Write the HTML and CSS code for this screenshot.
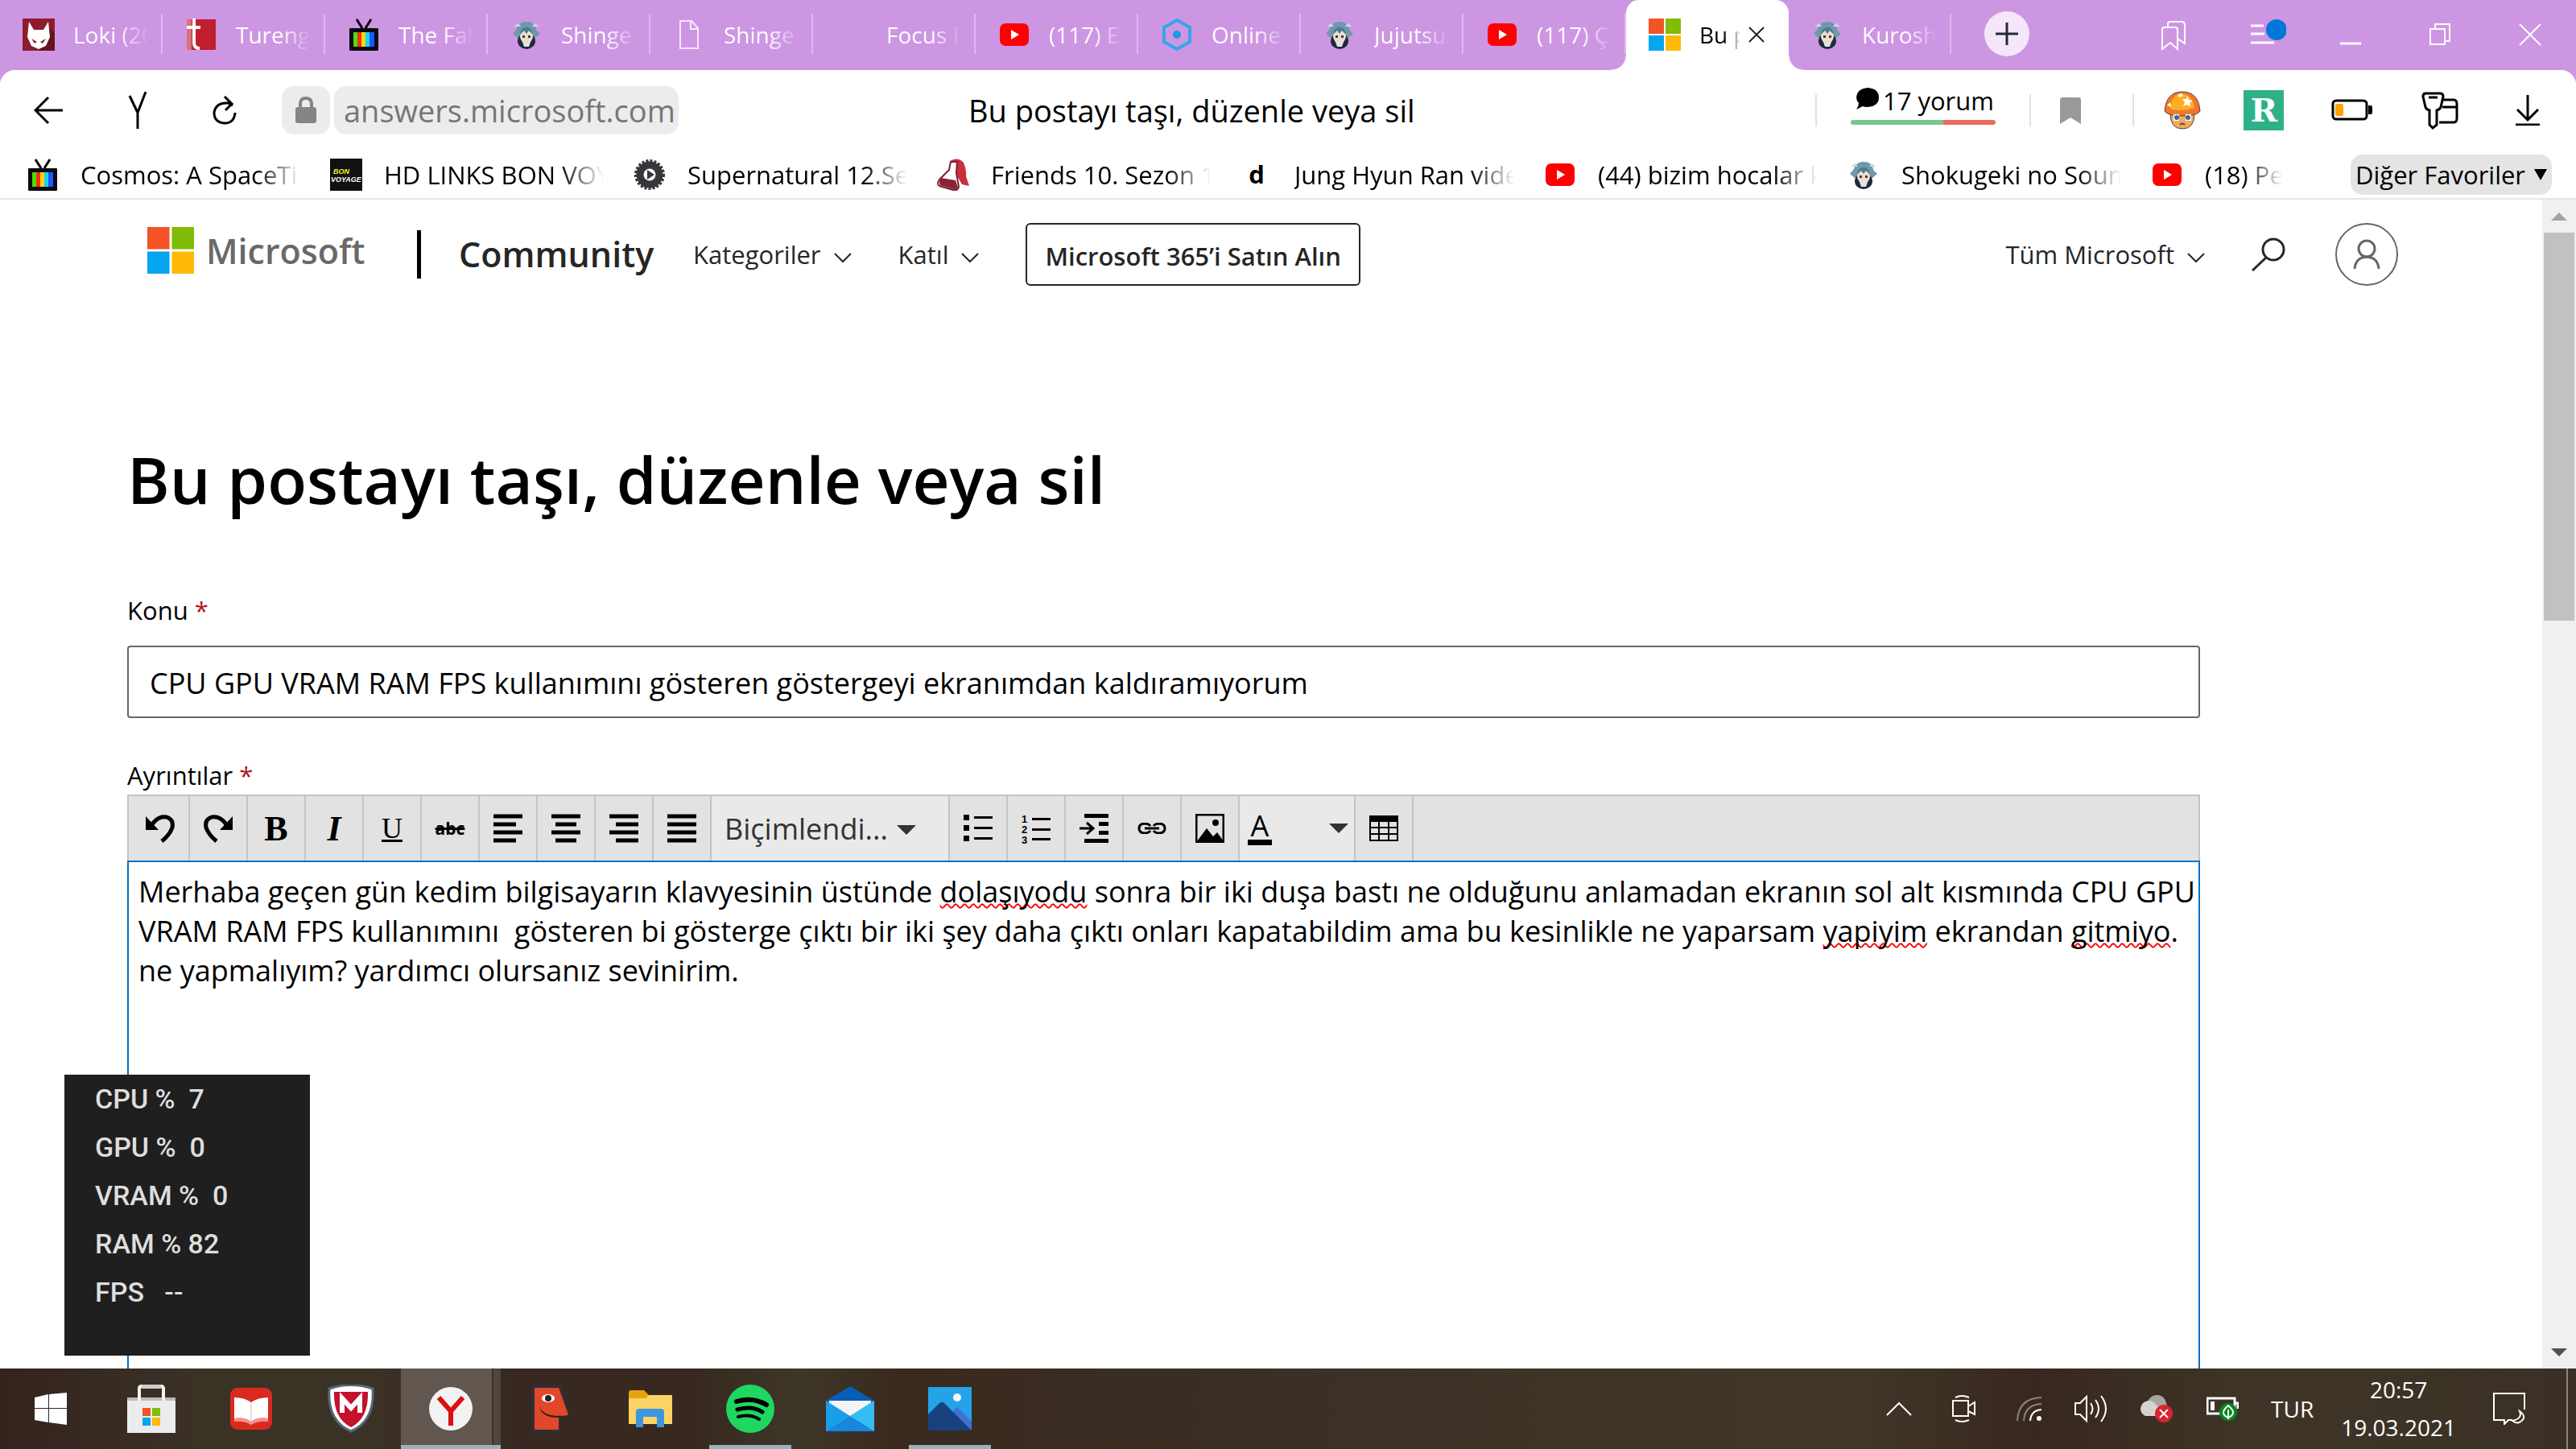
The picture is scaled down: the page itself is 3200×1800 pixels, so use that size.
FILE: index.html
```
<!DOCTYPE html>
<html lang="tr">
<head>
    <meta charset="UTF-8">
    <title>Bu postayı taşı, düzenle veya sil</title>
    <link rel="stylesheet" href="styles.css">
</head>
<body>
    <!-- Shared icons -->
    <svg class="sprite" width="0" height="0" aria-hidden="true">
        <symbol id="tv" viewBox="0 0 40 40">
            <path d="M11 1l7 11M29 1l-7 11" stroke="#000" stroke-width="3" fill="none"/>
            <rect x="2" y="12" width="36" height="28" rx="1" fill="#0b0b12"/>
            <path d="M7 17h5v18H7z" fill="#4be000"/>
            <path d="M12 17h5v18h-5z" fill="#ff2a1a"/>
            <path d="M17 17h5v18h-5z" fill="#ffd800"/>
            <path d="M22 17h5v18h-5z" fill="#19d3f5"/>
            <path d="M27 17h6v18h-6z" fill="#1d57ff"/>
        </symbol>
        <symbol id="youtube" viewBox="0 0 40 40">
            <rect x="2" y="6" width="36" height="28" rx="7" fill="#f00"/>
            <path d="M16 14l10 6-10 6z" fill="#fff"/>
        </symbol>
        <symbol id="anime" viewBox="0 0 40 40">
            <path d="M20 4c8 0 12 5 12 10l5 5-6 5H9l-6-5 5-6c1-5 5-9 12-9z" fill="#6f99ab"/>
            <path d="M4 10l6-4 3 4zM36 10l-6-4-3 4z" fill="#c9dbe0"/>
            <ellipse cx="20" cy="28" rx="11" ry="10" fill="#1d2a3c"/>
            <ellipse cx="20" cy="22" rx="8" ry="9" fill="#f0dccb"/>
            <path d="M12 20c1-8 5-9 8-9s7 1 8 9l-5-5-3 4-3-4z" fill="#4d7a90"/>
            <path d="M15 21h3v3h-3zM22 21h3v3h-3z" fill="#2c4454"/>
            <path d="M15 29h10l-2 6h-6z" fill="#dfe3e2"/>
        </symbol>
        <symbol id="microsoft" viewBox="0 0 40 40">
            <path d="M0 0h19v19H0z" fill="#f35325"/>
            <path d="M21 0h19v19H21z" fill="#81bc06"/>
            <path d="M0 21h19v19H0z" fill="#05a6f0"/>
            <path d="M21 21h19v19H21z" fill="#ffba08"/>
        </symbol>
        <symbol id="chevron" viewBox="0 0 22 14">
            <path d="M1 2l10 10L21 2" fill="none" stroke="#262626" stroke-width="2"/>
        </symbol>
        <symbol id="triangle" viewBox="0 0 24 12">
            <path d="M0 0h24L12 12z" fill="#333"/>
        </symbol>
    </svg>

    <!-- Tabs -->
    <div class="tab-bar">
        <div class="tabs">
            <button class="tab">
                <svg class="favicon" viewBox="0 0 40 40"><rect width="40" height="40" fill="#8c1c2e"/><path d="M33 12l7 6v22H20z" fill="#65131f"/><path d="M8 4l6 10h12l6-10 2 19-5 11-9 4-9-4-5-11z" fill="#fff"/><path d="M11 25l7 4-3 2zM29 25l-7 4 3 2z" fill="#8c1c2e"/></svg>
                <span class="tab-title">Loki (20</span>
            </button>
            <button class="tab">
                <svg class="favicon" viewBox="0 0 40 40"><path d="M2 1h36v38H2z" fill="#c01f2e"/><path d="M2 1h6v38H2z" fill="#d9707c"/><path d="M11 0v30q0 7 7 7M2 11h17" fill="none" stroke="#fff" stroke-width="4"/></svg>
                <span class="tab-title">Tureng</span>
            </button>
            <button class="tab">
                <svg class="favicon"><use href="#tv"/></svg>
                <span class="tab-title">The Fal</span>
            </button>
            <button class="tab">
                <svg class="favicon"><use href="#anime"/></svg>
                <span class="tab-title">Shinge</span>
            </button>
            <button class="tab">
                <svg class="favicon" viewBox="0 0 40 40"><path d="M9 3h14l8 9v25H9zM22 3v10h9" fill="none" stroke="#f6e9fb" stroke-width="2"/></svg>
                <span class="tab-title">Shinge</span>
            </button>
            <button class="tab">
                <span class="favicon"></span>
                <span class="tab-title">Focus F</span>
            </button>
            <button class="tab">
                <svg class="favicon"><use href="#youtube"/></svg>
                <span class="tab-title">(117) E</span>
            </button>
            <button class="tab">
                <svg class="favicon" viewBox="0 0 40 40"><path d="M20 2l16 9v18l-16 9-16-9V11z" fill="none" stroke="#35a6ea" stroke-width="4"/><circle cx="20" cy="20" r="5" fill="#1f98e6"/></svg>
                <span class="tab-title">Online</span>
            </button>
            <button class="tab">
                <svg class="favicon"><use href="#anime"/></svg>
                <span class="tab-title">Jujutsu</span>
            </button>
            <button class="tab">
                <svg class="favicon"><use href="#youtube"/></svg>
                <span class="tab-title">(117) Ç</span>
            </button>
            <button class="tab active">
                <svg class="favicon"><use href="#microsoft"/></svg>
                <span class="tab-title">Bu p</span>
                <svg class="tab-close" viewBox="0 0 20 20"><path d="M1 1l18 18M19 1L1 19" stroke="#222" stroke-width="2"/></svg>
            </button>
            <button class="tab">
                <svg class="favicon"><use href="#anime"/></svg>
                <span class="tab-title">Kurosh</span>
            </button>
        </div>
        <button class="new-tab" aria-label="Yeni sekme">
            <svg width="28" height="28" viewBox="0 0 28 28"><path d="M14 0v28M0 14h28" stroke="#1f2a3a" stroke-width="3"/></svg>
        </button>
        <div class="window-controls">
            <button aria-label="Favoriler"><svg width="34" height="40" viewBox="0 0 34 40"><path d="M3 12q0-2 2-2h14q3 0 3 3v24l-9-8-10 8zM10 9V5q0-2 3-2h14q4 0 4 4v23l-9-6" fill="none" stroke="#fff" stroke-width="2"/></svg></button>
            <button class="menu-btn" aria-label="Menü"><svg width="46" height="40" viewBox="0 0 46 40"><path d="M2 8h16M2 18h17M2 29h29" stroke="#fff" stroke-width="3"/><circle cx="34" cy="13" r="13" fill="#0078d7"/></svg></button>
            <button aria-label="Küçült"><svg width="26" height="40" viewBox="0 0 26 40"><path d="M0 30h26" stroke="#fff" stroke-width="3"/></svg></button>
            <button aria-label="Önceki boyut"><svg width="28" height="40" viewBox="0 0 28 40"><path d="M2 12h18v19H2zM8 11V6h18v21h-5" fill="none" stroke="#fff" stroke-width="2"/></svg></button>
            <button aria-label="Kapat"><svg width="28" height="40" viewBox="0 0 28 40"><path d="M1 6l26 26M27 6L1 32" stroke="#fff" stroke-width="2"/></svg></button>
        </div>
    </div>

    <!-- Address bar -->
    <div class="browser-top">
        <div class="address-bar">
            <div class="nav-buttons">
                <button aria-label="Geri"><svg width="36" height="36" viewBox="0 0 36 36"><path d="M36 18H2M18 2L2 18l16 16" fill="none" stroke="#000" stroke-width="3"/></svg></button>
                <button aria-label="Yandex"><svg width="24" height="46" viewBox="0 0 24 46"><path d="M2 5l10 21M22 0L12 26v20" fill="none" stroke="#000" stroke-width="3"/></svg></button>
                <button aria-label="Yenile"><svg width="30" height="36" viewBox="0 0 30 36"><path d="M25 12l-6-3Q4 8 2 21q0 12 13 13 12 0 13-13M15 1l9 9-8 8" fill="none" stroke="#000" stroke-width="3"/></svg></button>
            </div>
            <button class="chip lock" aria-label="Güvenli bağlantı"><svg width="26" height="34" viewBox="0 0 26 34"><rect y="13" width="26" height="20" rx="3" fill="#858585"/><path d="M6 14V9q0-7 7-7t7 7v5" fill="none" stroke="#858585" stroke-width="4"/></svg></button>
            <button class="chip url">answers.microsoft.com</button>
            <div class="page-title">Bu postayı taşı, düzenle veya sil</div>
            <div class="tools">
                <span class="tool-sep"></span>
                <div class="reviews">
                    <div class="reviews-text">
                        <svg width="30" height="28" viewBox="0 0 30 28"><path d="M15 0q14 1 14 12t-14 12q-4 0-6-1l-8 4q3-4 3-8-3-3-3-7Q2 1 15 0z"/></svg>
                        <span>17 yorum</span>
                    </div>
                    <div class="reviews-bar"></div>
                </div>
                <span class="tool-sep"></span>
                <button class="mark" aria-label="Favorilere ekle"><svg width="26" height="33" viewBox="0 0 26 33"><path d="M0 3q0-3 3-3h20q3 0 3 3v30l-13-8-13 8z" fill="#999"/></svg></button>
                <span class="tool-sep"></span>
                <div class="extensions">
                    <button class="mushroom" aria-label="Mantar"><svg width="46" height="48" viewBox="0 0 46 48"><path d="M8 28q0 19 15 19t15-19z" fill="#f0ac62" stroke="#5b4030" stroke-width="1"/><path d="M1 25Q3 1 23 1t22 24q-4 6-22 6T1 25z" fill="#f0782d" stroke="#5b4030" stroke-width="1"/><path d="M8 22Q9 5 22 3q14 2 16 18-8 3-15 3-9 0-15-2z" fill="#ffae22"/><path d="M29 6l2 5 5 1-4 3 1 5-4-3-5 2 2-5-3-4h5zM4 18l4-4 1 6zM17 5l5-2 2 3-4 2z" fill="#fff"/><path d="M12 29h7v8h-7zM27 29h7v8h-7z" fill="#fff"/><circle cx="16" cy="33" r="3" fill="#2e6aa3"/><circle cx="30" cy="33" r="3" fill="#2e6aa3"/><path d="M20 42q3-3 6 0" fill="none" stroke="#5b4030" stroke-width="2"/></svg></button>
                    <button class="readly">R</button>
                    <button aria-label="Pil"><svg width="52" height="28" viewBox="0 0 52 28"><rect x="2" y="2" width="42" height="23" rx="4" fill="#fff" stroke="#000" stroke-width="3"/><path d="M46 8h3q2 0 2 3v5q0 3-2 3h-3z"/><rect x="5" y="6" width="10" height="15" rx="2" fill="#ffa200"/></svg></button>
                    <button aria-label="Parolalar"><svg width="46" height="48" viewBox="0 0 46 48"><path d="M27 11h13q4 0 4 5v18q0 5-4 5H22M26 20h18" fill="none" stroke="#000" stroke-width="3"/><path d="M5 3h18q4 0 4 4l-3 13q-1 3-5 4v18l-5 4-4-4V24q-4-1-5-4L2 7q0-4 3-4z" fill="#fff" stroke="#000" stroke-width="3"/><path d="M9 8h11" stroke="#000" stroke-width="3"/></svg></button>
                    <button aria-label="İndirilenler"><svg width="30" height="38" viewBox="0 0 30 38"><path d="M15 0v31M2 18l13 13 13-13M0 37h30" fill="none" stroke="#000" stroke-width="3"/></svg></button>
                </div>
            </div>
        </div>

        <nav class="bookmarks">
            <a href="#" class="bookmark"><svg class="favicon"><use href="#tv"/></svg><span>Cosmos: A SpaceTi</span></a>
            <a href="#" class="bookmark">
                <svg class="favicon" viewBox="0 0 40 40"><rect width="40" height="40" fill="#111"/><text x="4" y="19" class="bon bon-top">BON</text><text x="1" y="29" class="bon">VOYAGE</text></svg>
                <span>HD LINKS BON VOY</span>
            </a>
            <a href="#" class="bookmark">
                <svg class="favicon" viewBox="0 0 40 40"><circle cx="20" cy="20" r="17" fill="none" stroke="#35373c" stroke-width="4" stroke-dasharray="3 2"/><circle cx="20" cy="20" r="12" fill="none" stroke="#35373c" stroke-width="9"/><path d="M17 14l9 6-9 6z" fill="#35373c"/></svg>
                <span>Supernatural 12.Sez</span>
            </a>
            <a href="#" class="bookmark">
                <svg class="favicon" viewBox="0 0 40 40"><path d="M16 3q10-6 17 2 4 9 3 17l4 12-9-2-7-12z" fill="#c9303a"/><path d="M17 4h8l-1 14 3 17q-1 5-7 4L3 34q-4-3 0-8L15 14z" fill="#fff" stroke="#7c2033" stroke-width="2"/><path d="M5 24l18 3 3 9q-2 3-6 2L4 33q-3-4 1-9z" fill="#8b2236"/></svg>
                <span>Friends 10. Sezon 1</span>
            </a>
            <a href="#" class="bookmark"><span class="favicon letter-icon">d</span><span>Jung Hyun Ran vide</span></a>
            <a href="#" class="bookmark"><svg class="favicon"><use href="#youtube"/></svg><span>(44) bizim hocalar k</span></a>
            <a href="#" class="bookmark"><svg class="favicon"><use href="#anime"/></svg><span>Shokugeki no Soum</span></a>
            <a href="#" class="bookmark last"><svg class="favicon"><use href="#youtube"/></svg><span>(18) Pe</span></a>
            <button class="other">Diğer Favoriler <svg width="16" height="14" viewBox="0 0 16 14"><path d="M0 0h16L8 14z"/></svg></button>
        </nav>
    </div>

    <!-- Web page -->
    <div class="viewport">
        <div class="page">
            <header class="site-header">
                <a href="#" class="logo"><svg width="58" height="58"><use href="#microsoft"/></svg>Microsoft</a>
                <span class="divider"></span>
                <a href="#" class="community">Community</a>
                <button class="menu">Kategoriler <svg width="22" height="14"><use href="#chevron"/></svg></button>
                <button class="menu">Katıl <svg width="22" height="14"><use href="#chevron"/></svg></button>
                <a href="#" class="buy">Microsoft 365’i Satın Alın</a>
                <div class="header-right">
                    <button class="menu">Tüm Microsoft <svg width="22" height="14"><use href="#chevron"/></svg></button>
                    <button class="search" aria-label="Ara"><svg width="42" height="42" viewBox="0 0 42 42"><circle cx="27" cy="15" r="13" fill="none" stroke="#262626" stroke-width="3"/><path d="M18 25L1 41" stroke="#262626" stroke-width="3"/></svg></button>
                    <button class="account" aria-label="Hesap"><svg width="78" height="78" viewBox="0 0 78 78"><g fill="none" stroke="#666" stroke-width="2"><circle cx="39" cy="39" r="38"/><circle cx="39" cy="32" r="10" stroke-width="3"/><path d="M24 57q1-14 15-15 14 1 15 15" stroke-width="3"/></g></svg></button>
                </div>
            </header>

            <main class="edit-form">
                <h1>Bu postayı taşı, düzenle veya sil</h1>

                <label for="subject">Konu <span class="required">*</span></label>
                <input type="text" id="subject" name="subject" value="CPU GPU VRAM RAM FPS kullanımını gösteren göstergeyi ekranımdan kaldıramıyorum">

                <label id="detailsLabel" class="details-label">Ayrıntılar <span class="required">*</span></label>
                <div class="toolbar">
                    <button aria-label="Geri al"><svg width="38" height="36" viewBox="0 0 38 36"><path d="M9 13Q17 2 27 4q9 3 7 13-3 9-13 17" fill="none" stroke="#000" stroke-width="5"/><path d="M1 3v17h16z"/></svg></button>
                    <button aria-label="Yinele"><svg width="38" height="36" viewBox="0 0 38 36"><path d="M29 13Q21 2 11 4 2 7 4 17q3 9 13 17" fill="none" stroke="#000" stroke-width="5"/><path d="M37 3v17H21z"/></svg></button>
                    <button class="bold">B</button>
                    <button class="italic">I</button>
                    <button class="underline">U</button>
                    <button class="strike">abc</button>
                    <button aria-label="Sola hizala"><svg width="36" height="36" viewBox="0 0 36 36"><path d="M0 3h36M0 13h28M0 23h36M0 33h28" stroke="#000" stroke-width="5"/></svg></button>
                    <button aria-label="Ortala"><svg width="36" height="36" viewBox="0 0 36 36"><path d="M0 3h36M5 13h26M0 23h36M5 33h26" stroke="#000" stroke-width="5"/></svg></button>
                    <button aria-label="Sağa hizala"><svg width="36" height="36" viewBox="0 0 36 36"><path d="M0 3h36M8 13h28M0 23h36M8 33h28" stroke="#000" stroke-width="5"/></svg></button>
                    <button aria-label="İki yana yasla"><svg width="36" height="36" viewBox="0 0 36 36"><path d="M0 3h36M0 13h36M0 23h36M0 33h36" stroke="#000" stroke-width="5"/></svg></button>
                    <div class="format">
                        <select aria-label="Biçimlendirme"><option>Biçimlendi...</option></select>
                        <svg width="24" height="12"><use href="#triangle"/></svg>
                    </div>
                    <button aria-label="Madde işaretleri"><svg width="38" height="36" viewBox="0 0 38 36"><path d="M1 1h7v7H1zM1 14h7v7H1zM1 27h7v7H1zM14 3h23v3H14zM14 16h23v3H14zM14 29h23v3H14z"/></svg></button>
                    <button aria-label="Numaralandırma"><svg width="36" height="38" viewBox="0 0 36 38"><path d="M13 6h23v3H13zM13 19h23v3H13zM13 31h23v3H13z"/><g class="list-number"><text x="0" y="12">1</text><text x="0" y="25">2</text><text x="0" y="38">3</text></g></svg></button>
                    <button aria-label="Girintiyi artır"><svg width="36" height="36" viewBox="0 0 36 36"><path d="M6 0h30v5H6zM24 10h12v5H24zM24 21h12v5H24zM6 31h30v5H6z"/><path d="M0 18h16M9 11l8 7-8 7" fill="none" stroke="#000" stroke-width="3"/></svg></button>
                    <button aria-label="Bağlantı"><svg width="36" height="14" viewBox="0 0 36 14"><path d="M16 4q-2-3-8-3-6 1-6 6t6 6q6 0 8-3M20 4q2-3 8-3 6 1 6 6t-6 6q-6 0-8-3M9 7h18" fill="none" stroke="#000" stroke-width="3"/></svg></button>
                    <button aria-label="Resim"><svg width="36" height="36" viewBox="0 0 36 36"><path d="M1 1h34v34H1z" fill="none" stroke="#000" stroke-width="3"/><circle cx="25" cy="11" r="4"/><path d="M2 34l12-16 8 10 5-5 8 11z"/></svg></button>
                    <button class="color">
                        <span>A</span>
                        <svg width="24" height="12"><use href="#triangle"/></svg>
                    </button>
                    <button aria-label="Tablo"><svg width="36" height="32" viewBox="0 0 36 32"><path d="M1 1h34v30H1zM1 15h34M1 23h34M12 8v22M24 8v22" fill="none" stroke="#000" stroke-width="2"/><path d="M0 0h36v8H0z"/></svg></button>
                </div>
                <div class="editor" contenteditable="true" spellcheck="false" role="textbox" aria-labelledby="detailsLabel">Merhaba geçen gün kedim bilgisayarın klavyesinin üstünde <span class="typo">dolaşıyodu</span> sonra bir iki duşa bastı ne olduğunu anlamadan ekranın sol alt kısmında CPU GPU<br>VRAM RAM FPS kullanımını&nbsp; gösteren bi gösterge çıktı bir iki şey daha çıktı onları kapatabildim ama bu kesinlikle ne yaparsam <span class="typo">yapiyim</span> ekrandan <span class="typo">gitmiyo</span>.<br>ne yapmalıyım? yardımcı olursanız sevinirim.</div>
            </main>
        </div>
        <div class="scrollbar">
            <svg width="20" height="10" viewBox="0 0 20 10"><path d="M0 10h20L10 0z" fill="#a3a3a3"/></svg>
            <div class="thumb"></div>
            <svg width="20" height="10" viewBox="0 0 20 10"><path d="M0 0h20L10 10z" fill="#505050"/></svg>
        </div>
    </div>

    <!-- Performance overlay -->
    <div class="stats">
        <div>CPU %  7</div>
        <div>GPU %  0</div>
        <div>VRAM %  0</div>
        <div>RAM % 82</div>
        <div>FPS   --</div>
    </div>

    <!-- Taskbar -->
    <footer class="taskbar">
        <button class="start" aria-label="Başlat"><svg width="40" height="40" viewBox="0 0 40 40"><path d="M0 6l17-4v17H0zM18 2l22-2v19H18zM0 20h17v17L0 34zM18 20h22v20l-22-3z" fill="#fff"/></svg></button>
        <button class="app" aria-label="Store"><svg width="60" height="60" viewBox="0 0 60 60"><path d="M0 16h60v44H0z" fill="#ececec"/><path d="M0 16h60v4H0z" fill="#bbb"/><path d="M15 20V5q0-3 3-3h24q3 0 3 3v15" fill="none" stroke="#f4f4f4" stroke-width="4"/><path d="M18 0h24v5H18z" fill="#ccc"/><path d="M19 29h10v10H19z" fill="#f35325"/><path d="M31 29h10v10H31z" fill="#81bc06"/><path d="M19 41h10v10H19z" fill="#05a6f0"/><path d="M31 41h10v10H31z" fill="#ffba08"/></svg></button>
        <button class="app" aria-label="Okuyucu"><svg width="52" height="52" viewBox="0 0 52 52"><rect width="52" height="52" rx="9" fill="#da2a20"/><path d="M5 12q13 0 21 6 8-6 21-6v26q-13-2-21 4-8-6-21-4z" fill="#fff"/><path d="M5 38q13-2 21 4 8-6 21-4v4q-13-1-21 4-8-5-21-4z" fill="#f0948d"/><path d="M26 18v24" stroke="#e6b5b2" stroke-width="1"/></svg></button>
        <button class="app" aria-label="McAfee"><svg width="58" height="60" viewBox="0 0 58 60"><path d="M2 5Q29-4 56 5q3 40-27 53Q-1 45 2 5z" fill="#fff" stroke="#566675" stroke-width="3"/><path d="M8 9h42q1 33-21 44Q7 42 8 9z" fill="#c4122d"/><path d="M18 35V17l11 12 11-12v18" fill="none" stroke="#fff" stroke-width="6"/></svg></button>
        <button class="app current" aria-label="Yandex"><svg width="54" height="54" viewBox="0 0 54 54"><circle cx="27" cy="27" r="27" fill="#f2f2f2"/><path d="M12 13l15 17 15-17M27 29v19" fill="none" stroke="#dc0f0f" stroke-width="6"/></svg></button>
        <button class="app" aria-label="Maske"><svg width="46" height="60" viewBox="0 0 46 60"><path d="M0 0h37v4l9 34q-6 6-11 4v18H0z" fill="#2d3036"/><path d="M3 4h30l12 33q-5 4-12 3v16H3z" fill="#e1472a"/><path d="M9 27q6 15 36 11-4 3-13 3Q12 41 9 27z" fill="#3a1e1a"/><ellipse cx="20" cy="17" rx="8" ry="5" fill="#fff"/><circle cx="20" cy="17" r="4" fill="#222"/></svg></button>
        <button class="app" aria-label="Dosya Gezgini"><svg width="54" height="46" viewBox="0 0 54 46"><path d="M0 3q0-3 3-3h16l6 6h26q3 0 3 3v33H0z" fill="#e4a50c"/><path d="M0 10h21l4-4h29v36H0z" fill="#fdd365"/><path d="M9 46V27q0-4 4-4h27q4 0 4 4v19h-9V33H18v13z" fill="#3b96df"/></svg></button>
        <button class="app open" aria-label="Spotify"><svg width="60" height="60" viewBox="0 0 60 60"><circle cx="30" cy="30" r="30" fill="#1ed760"/><g fill="none" stroke="#000" stroke-linecap="round"><path d="M13 21q20-6 37 4" stroke-width="6"/><path d="M14 31q18-5 31 3" stroke-width="5"/><path d="M15 40q15-4 26 3" stroke-width="4"/></g></svg></button>
        <button class="app" aria-label="Posta"><svg width="60" height="56" viewBox="0 0 60 56"><path d="M0 18L30 0l30 18v15H0z" fill="#075eb6"/><path d="M4 18h52v20H4z" fill="#f5f5f5"/><path d="M0 18l30 19 30-19v38H0z" fill="#1a9eea"/><path d="M0 56l60-38v38z" fill="#35bdf3"/><path d="M30 37l30 19H0z" fill="#1587dc"/></svg></button>
        <button class="app open" aria-label="Fotoğraflar"><svg width="54" height="54" viewBox="0 0 54 54"><rect width="54" height="54" fill="#24a3e8"/><path d="M20 43l16-18 18 18v11H20z" fill="#4370ce"/><path d="M0 34l14-14q3-3 6 0l34 34H0z" fill="#17417f"/><circle cx="36" cy="13" r="5" fill="#f1f5f9"/></svg></button>

        <div class="tray">
            <svg class="wide-gap" width="32" height="18" viewBox="0 0 32 18"><path d="M1 17L16 2l15 15" fill="none" stroke="#fff" stroke-width="2"/></svg>
            <svg class="wide-gap" width="30" height="36" viewBox="0 0 30 36"><path d="M1 8h19v19H1zM20 15l8-5v15l-8-4M4 4q8-4 17 0M4 32q8 4 17 0" fill="none" stroke="#fff" stroke-width="2"/></svg>
            <svg width="32" height="32" viewBox="0 0 32 32"><g fill="none" stroke="#8b857f" stroke-width="2"><path d="M1 31Q2 3 31 2M9 31q1-20 22-21"/><path d="M17 31q1-13 14-14" stroke="#fff"/></g><circle cx="28" cy="28" r="3" fill="#fff"/></svg>
            <svg width="42" height="38" viewBox="0 0 42 38"><path d="M1 12h6l8-8v30l-8-8H1zM20 12q5 7 0 14M26 8q8 11 0 22M33 3q12 16 0 32" fill="none" stroke="#fff" stroke-width="2"/></svg>
            <svg width="42" height="36" viewBox="0 0 42 36"><path d="M8 10Q13 0 22 1q8 1 10 10l4 15H8z" fill="#a8a4a0"/><path d="M6 27q-6-3-6-9 1-9 10-10 6 0 9 5l6 4v10z" fill="#d5d3d1"/><circle cx="29" cy="24" r="11" fill="#da2230"/><path d="M24 19l10 10M34 19L24 29" stroke="#fff" stroke-width="2"/></svg>
            <svg width="40" height="32" viewBox="0 0 40 32"><path d="M1 3h34v19H1zM36 9h3v7" fill="none" stroke="#fff" stroke-width="3"/><path d="M5 7h5v11H5z" fill="#fff"/><circle cx="27" cy="20" r="11" fill="#07871e"/><path d="M27 12q12 10 0 15-12-5 0-15zM27 17v12" fill="none" stroke="#fff" stroke-width="2"/></svg>
            <span class="lang">TUR</span>
            <div class="clock"><time>20:57</time><time>19.03.2021</time></div>
            <svg width="40" height="40" viewBox="0 0 40 40"><path d="M24 34h-5l-5 5v-5H1V1h38v20" fill="none" stroke="#fff" stroke-width="2"/><path d="M33 23q4 9-9 12 8 6 14-3 1-5-5-9z" fill="none" stroke="#fff" stroke-width="2"/></svg>
        </div>
        <span class="show-desktop"></span>
    </footer>
</body>
</html>
```

FILE: styles.css
```
* {
    box-sizing: border-box;
}
body {
    display: flex;
    flex-direction: column;
    height: 100vh;
    margin: 0;
    overflow: hidden;
    background: #fff;
    color: #000;
    font-family: "Open Sans", "Noto Sans", sans-serif;
    font-size: 31px;
}
button, input, select {
    margin: 0;
    padding: 0;
    border: none;
    background: none;
    color: inherit;
    font: inherit;
}
a {
    color: inherit;
    text-decoration: none;
}
svg {
    display: block;
    flex: none;
}
.sprite {
    position: absolute;
}

/* Tabs */
.tab-bar {
    display: flex;
    align-items: center;
    height: 87px;
    background: #cd96e3;
    color: #fff;
    font-size: 28px;
}
.tabs {
    display: flex;
    height: 87px;
}
.tab {
    position: relative;
    display: flex;
    align-items: center;
    gap: 23px;
    width: 202px;
    padding: 0 0 2px 28px;
}
.tab::after {
    content: "";
    position: absolute;
    top: 17px;
    right: 0;
    width: 2px;
    height: 50px;
    background: #dfb8ee;
}
.favicon {
    flex: none;
    width: 40px;
    height: 40px;
}
.tab-title {
    width: 90px;
    overflow: hidden;
    white-space: nowrap;
    text-align: left;
    mask-image: linear-gradient(to right, #000 60%, transparent 105%);
}
.tab.active {
    background: #fff;
    border-radius: 16px 16px 0 0;
    color: #000;
}
.tab.active .tab-title {
    width: 50px;
}
.tab.active::before,
.tab.active::after {
    content: "";
    position: absolute;
    top: auto;
    bottom: 0;
    right: -18px;
    width: 18px;
    height: 18px;
    background: radial-gradient(circle at top right, transparent 17px, #fff 18px);
}
.tab.active::before {
    right: auto;
    left: -18px;
    background: radial-gradient(circle at top left, transparent 17px, #fff 18px);
}
.tab-close {
    position: absolute;
    right: 30px;
    width: 20px;
    height: 20px;
}
.new-tab {
    display: flex;
    align-items: center;
    justify-content: center;
    width: 56px;
    height: 56px;
    margin: 0 0 4px 41px;
    border-radius: 50%;
    background: #f5e6fa;
}
.window-controls {
    display: flex;
    gap: 84px;
    margin-left: auto;
    padding-right: 43px;
}
.menu-btn {
    margin: 0 -17px 0 -7px;
}

/* Address bar */
.browser-top {
    height: 161px;
    border-bottom: 2px solid #e5e5e5;
    background: radial-gradient(circle at 20px 20px, #fff 20px, #cd96e3 21px) left top / 20px 20px no-repeat,
        radial-gradient(circle at 0 20px, #fff 20px, #cd96e3 21px) right top / 20px 20px no-repeat, #fff;
}
.address-bar {
    display: flex;
    align-items: center;
    height: 100px;
    font-size: 38px;
}
.nav-buttons {
    display: flex;
    align-items: center;
    justify-content: space-between;
    width: 350px;
    padding: 0 56px 0 42px;
}
.chip {
    display: flex;
    align-items: center;
    height: 60px;
    padding: 0 12px;
    border-radius: 15px;
    background: #ececec;
    color: #767676;
}
.lock {
    justify-content: center;
    width: 60px;
    margin-right: 5px;
}
.url {
    width: 428px;
}
.page-title {
    flex: 1;
    padding-left: 360px;
    white-space: nowrap;
}
.tools {
    display: flex;
    align-items: center;
}
.tool-sep {
    width: 2px;
    height: 40px;
    background: #e2e2e2;
}
.reviews {
    width: 180px;
    margin: 0 42px;
    padding-bottom: 10px;
    font-size: 31px;
}
.reviews-text {
    display: flex;
    justify-content: space-between;
    height: 40px;
    padding: 0 2px 0 6px;
    line-height: 32px;
}
.reviews-bar {
    height: 6px;
    border-radius: 3px;
    background: linear-gradient(to right, #7ac690 64%, #ec6a5e 64%);
}
.mark {
    margin: 0 64px 0 36px;
}
.extensions {
    display: flex;
    align-items: center;
    justify-content: space-between;
    width: 549px;
    padding: 0 35px;
}
.extensions button {
    display: flex;
    align-items: center;
    justify-content: center;
    width: 50px;
}
.extensions .mushroom {
    margin-right: -8px;
}
.extensions .readly {
    height: 50px;
    background: #2fb188;
    color: #fff;
    font: bold 40px/50px "DejaVu Serif", serif;
}

/* Bookmarks */
.bookmarks {
    display: flex;
    align-items: center;
    height: 60px;
    padding: 0 30px 0 33px;
    font-size: 31px;
}
.bookmark {
    display: flex;
    align-items: center;
    gap: 27px;
    width: 377px;
}
.bookmark span:last-child {
    width: 273px;
    overflow: hidden;
    white-space: nowrap;
    mask-image: linear-gradient(to right, #000 80%, transparent);
}
.bookmark.last {
    width: 163px;
}
.bookmark.last span {
    width: 96px;
    mask-image: linear-gradient(to right, #000 50%, transparent);
}
.letter-icon {
    font-weight: bold;
    line-height: 38px;
    text-align: center;
}
.bon {
    fill: #fff;
    font: italic bold 9px "Liberation Sans", sans-serif;
}
.bon-top {
    fill: #f5ee2b;
}
.other {
    display: flex;
    align-items: center;
    justify-content: space-between;
    width: 250px;
    height: 50px;
    margin-left: auto;
    padding: 0 6px;
    border-radius: 15px;
    background: #e4e4e4;
    font-size: 31px;
    white-space: nowrap;
}

/* Page and scrollbar */
.viewport {
    display: flex;
    flex: 1;
    min-height: 0;
}
.page {
    display: flex;
    flex: 1;
    flex-direction: column;
    min-width: 0;
}
.scrollbar {
    display: flex;
    flex-direction: column;
    align-items: center;
    width: 42px;
    padding: 16px 0 15px;
    background: #f0f0f0;
}
.scrollbar .thumb {
    width: 38px;
    height: 482px;
    margin: 15px 0 auto;
    background: #c1c1c1;
}

/* Site header */
.site-header {
    display: flex;
    align-items: center;
    height: 136px;
    padding: 0 179px 0 183px;
    color: #262626;
    white-space: nowrap;
}
.logo {
    display: flex;
    align-items: center;
    gap: 15px;
    width: 335px;
    padding-bottom: 10px;
    color: #696969;
    font-size: 43px;
    font-weight: 600;
}
.divider {
    width: 5px;
    height: 60px;
    background: #000;
}
.community {
    width: 291px;
    margin-left: 47px;
    padding-bottom: 2px;
    font-size: 43px;
    font-weight: 600;
}
.menu {
    display: flex;
    align-items: center;
    gap: 16px;
    margin-right: 58px;
}
.menu svg {
    margin-top: 8px;
}
.buy {
    height: 78px;
    padding: 0 22px;
    border: 2px solid #262626;
    border-radius: 6px;
    font-weight: 600;
    line-height: 78px;
}
.header-right {
    display: flex;
    align-items: center;
    margin-left: auto;
}
.search {
    margin-right: 62px;
}

/* Form */
.edit-form {
    display: flex;
    flex: 1;
    flex-direction: column;
    padding: 161px 425px 0 158px;
}
h1 {
    margin: 0 0 89px;
    font-size: 80px;
    font-weight: 600;
    line-height: 100px;
}
label {
    line-height: 48px;
}
.required {
    color: #b5121b;
}
#subject {
    height: 90px;
    margin: 20px 0 47px;
    padding: 2px 26px 0;
    border: 2px solid #666;
    border-radius: 4px;
    font-size: 36px;
}
.toolbar {
    display: flex;
    height: 82px;
    padding-left: 4px;
    border: 2px solid #c4c4c4;
    border-bottom: none;
    background: #e2e2e2;
}
.toolbar button {
    display: flex;
    align-items: center;
    justify-content: center;
    width: 72px;
    border-right: 2px solid #c4c4c4;
}
.toolbar .bold,
.toolbar .italic,
.toolbar .underline {
    font-family: "Liberation Serif", serif;
    font-size: 44px;
    font-weight: bold;
}
.toolbar .italic {
    font-style: italic;
}
.toolbar .underline {
    font-size: 36px;
    font-weight: normal;
    text-decoration: underline;
}
.toolbar .strike {
    font-size: 21px;
    font-weight: bold;
    text-decoration: line-through;
    text-decoration-thickness: 3px;
}
.format {
    position: relative;
    width: 296px;
    border-right: 2px solid #c4c4c4;
    background: #e9e9e9;
}
.format select {
    appearance: none;
    width: 100%;
    height: 80px;
    padding-left: 16px;
    color: #333;
    font-size: 36px;
}
.format svg {
    position: absolute;
    top: 36px;
    right: 40px;
    pointer-events: none;
}
.toolbar .color {
    justify-content: space-between;
    width: 144px;
    padding: 0 7px 0 10px;
    background: #e9e9e9;
}
.color span {
    width: 30px;
    border-bottom: 7px solid #000;
    font-size: 36px;
    line-height: 34px;
}
.list-number {
    font: bold 13px "Liberation Sans", sans-serif;
}
.editor {
    flex: 1;
    padding: 12px;
    border: 2px solid #0072c6;
    border-bottom: none;
    outline: none;
    font-size: 36px;
    line-height: 49px;
    white-space: nowrap;
}
.typo {
    text-decoration: underline wavy #f00 2px;
    text-decoration-skip-ink: none;
}

/* Performance overlay */
.stats {
    position: absolute;
    bottom: 116px;
    left: 80px;
    width: 305px;
    height: 349px;
    padding-left: 38px;
    background: #1f1f1f;
    color: #dedede;
    font: 500 34px/60px Roboto, sans-serif;
}
.stats div {
    white-space: pre;
}

/* Taskbar */
.taskbar {
    display: flex;
    height: 100px;
    background: linear-gradient(to right, #33231d, #3b3226 8%, #3b3226 14%, #372821 20%, #37291f 27%, #3e3629 31%, #39291f 35%, #3a3025 50%, #403629 72%, #38281f 79%, #3e3528 88%, #3a3025);
    color: #fff;
    font-size: 28px;
}
.taskbar button {
    display: flex;
    align-items: center;
    justify-content: center;
    width: 124px;
}
.taskbar .start {
    width: 126px;
}
.app.current {
    background: linear-gradient(#9cb0b8, #9cb0b8) bottom / 100% 5px no-repeat,
        linear-gradient(to right, #62574f 91%, #39312b 91%, #39312b 93%, #4f463f 93%);
}
.app.open {
    background: linear-gradient(#9cb0b8, #9cb0b8) center bottom / 102px 5px no-repeat;
}
.tray {
    display: flex;
    align-items: center;
    gap: 40px;
    margin-left: auto;
}
.wide-gap {
    margin-right: 10px;
}
.clock {
    display: flex;
    flex-direction: column;
    align-items: center;
    margin: 0 6px 0 -6px;
    line-height: 47px;
}
.show-desktop {
    width: 2px;
    margin: 0 10px 0 51px;
    background: #8a847d;
}
```
